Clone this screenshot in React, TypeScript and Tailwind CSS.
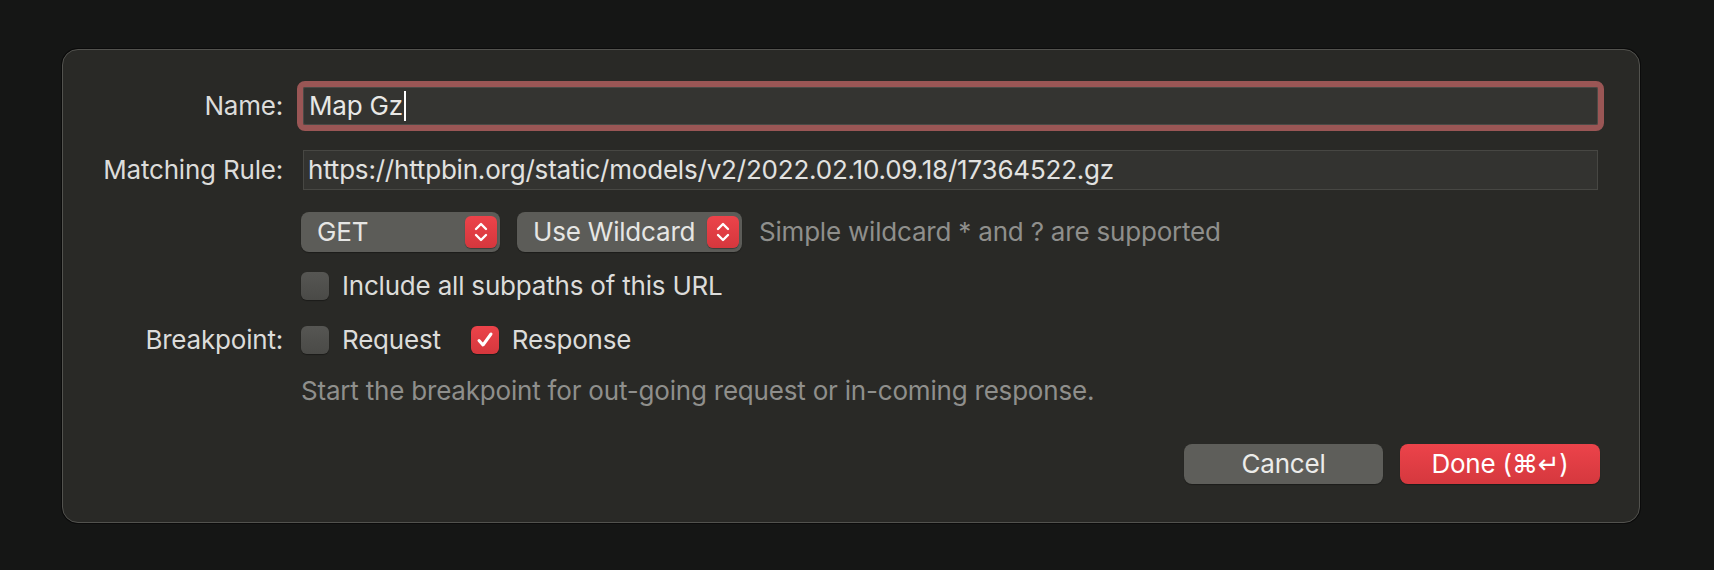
import React from 'react';

const Stepper = () => (
  <div className="w-8 h-8 rounded-[6px] bg-gradient-to-b from-[#ec434a] to-[#d5373d] flex items-center justify-center shadow-[0_1px_1px_rgba(0,0,0,0.35)]">
    <svg width="16" height="22" viewBox="0 0 16 22" fill="none" stroke="#ffffff" strokeWidth="2.4" strokeLinecap="round" strokeLinejoin="round">
      <path d="M3 8 L8 3 L13 8" />
      <path d="M3 14 L8 19 L13 14" />
    </svg>
  </div>
);

const Popup = ({ label, width }: { label: string; width: string }) => (
  <div className={`${width} h-10 rounded-[8px] bg-[#5c5c58] shadow-[0_1px_1px_rgba(0,0,0,0.3)] flex items-center justify-between pl-[16px] pr-[3px] text-[#e6e6e4]`}>
    <span>{label}</span>
    <Stepper />
  </div>
);

const Checkbox = ({ checked = false }: { checked?: boolean }) =>
  checked ? (
    <div className="w-7 h-7 rounded-[6px] bg-gradient-to-b from-[#ec434a] to-[#d5373d] flex items-center justify-center shadow-[0_1px_1px_rgba(0,0,0,0.35)]">
      <svg width="20" height="20" viewBox="0 0 20 20" fill="none" stroke="#ffffff" strokeWidth="3" strokeLinecap="round" strokeLinejoin="round">
        <path d="M4 10.5 L8 15 L16 4" />
      </svg>
    </div>
  ) : (
    <div className="w-7 h-7 rounded-[6px] bg-gradient-to-b from-[#565653] to-[#4a4a47] shadow-[0_1px_1px_rgba(0,0,0,0.35)]" />
  );

const Label = ({ children }: { children: React.ReactNode }) => (
  <div className="text-right text-[#dcdcda]">{children}</div>
);

export default function App() {
  return (
    <div className="min-h-[570px] bg-[#151615] pl-[62px] pt-[49px] font-['Inter','Liberation_Sans',sans-serif] text-[26px] leading-[32px] tracking-[-0.2px]">
      <div className="w-[1578px] h-[474px] rounded-[16px] bg-[#292926] border border-[#52524e] shadow-[0_0_0_1px_#0b0b0b] pt-[37px] pr-[41px] flex flex-col">
        {/* Name */}
        <div className="grid grid-cols-[220px_1fr] gap-x-[18px] items-center">
          <Label>Name:</Label>
          <div className="ml-[2px] h-[38px] bg-[#343431] border border-[#4a4a46] outline outline-[6px] outline-[#9a5655] rounded-[2px] flex items-center pl-[5px] text-[#e8e8e6]">
            <span>Map Gz</span>
            <span className="w-[2px] h-[30px] bg-white ml-[1px]" />
          </div>
        </div>

        {/* Matching rule */}
        <div className="grid grid-cols-[220px_1fr] gap-x-[18px] items-center mt-[25px]">
          <Label>Matching Rule:</Label>
          <div className="ml-[2px] h-[40px] bg-[#333330] border border-[#474743] flex items-center pl-[4px] text-[#e2e2e0]">
            https://httpbin.org/static/models/v2/2022.02.10.09.18/17364522.gz
          </div>
        </div>

        {/* Method + match type */}
        <div className="grid grid-cols-[220px_1fr] gap-x-[18px] items-center mt-[22px]">
          <div />
          <div className="flex items-center">
            <Popup label="GET" width="w-[199px]" />
            <div className="ml-[17px]">
              <Popup label="Use Wildcard" width="w-[225px]" />
            </div>
            <span className="ml-[17px] text-[#8f8f8c]">Simple wildcard * and ? are supported</span>
          </div>
        </div>

        {/* Subpaths */}
        <div className="grid grid-cols-[220px_1fr] gap-x-[18px] items-center mt-[18px]">
          <div />
          <div className="flex items-center gap-[13px] text-[#dcdcda]">
            <Checkbox />
            <span>Include all subpaths of this URL</span>
          </div>
        </div>

        {/* Breakpoint */}
        <div className="grid grid-cols-[220px_1fr] gap-x-[18px] items-center mt-[22px]">
          <Label>Breakpoint:</Label>
          <div className="flex items-center text-[#dcdcda]">
            <div className="flex items-center gap-[13px]">
              <Checkbox />
              <span>Request</span>
            </div>
            <div className="flex items-center gap-[13px] ml-[30px]">
              <Checkbox checked />
              <span>Response</span>
            </div>
          </div>
        </div>

        <div className="grid grid-cols-[220px_1fr] gap-x-[18px] items-center mt-[19px]">
          <div />
          <div className="text-[#8f8f8c]">Start the breakpoint for out-going request or in-coming response.</div>
        </div>

        {/* Buttons */}
        <div className="flex justify-end gap-[17px] mt-[37px] mr-[-2px]">
          <button className="w-[199px] h-10 rounded-[8px] bg-[#5e5e5a] text-[#ececea] shadow-[0_1px_1px_rgba(0,0,0,0.3)]">
            Cancel
          </button>
          <button className="w-[200px] h-10 rounded-[8px] bg-gradient-to-b from-[#ec434a] to-[#d5383e] text-white shadow-[0_1px_1px_rgba(0,0,0,0.3)]">
            Done (⌘<span className="font-['DejaVu_Sans',sans-serif]">↵</span>)
          </button>
        </div>
      </div>
    </div>
  );
}
